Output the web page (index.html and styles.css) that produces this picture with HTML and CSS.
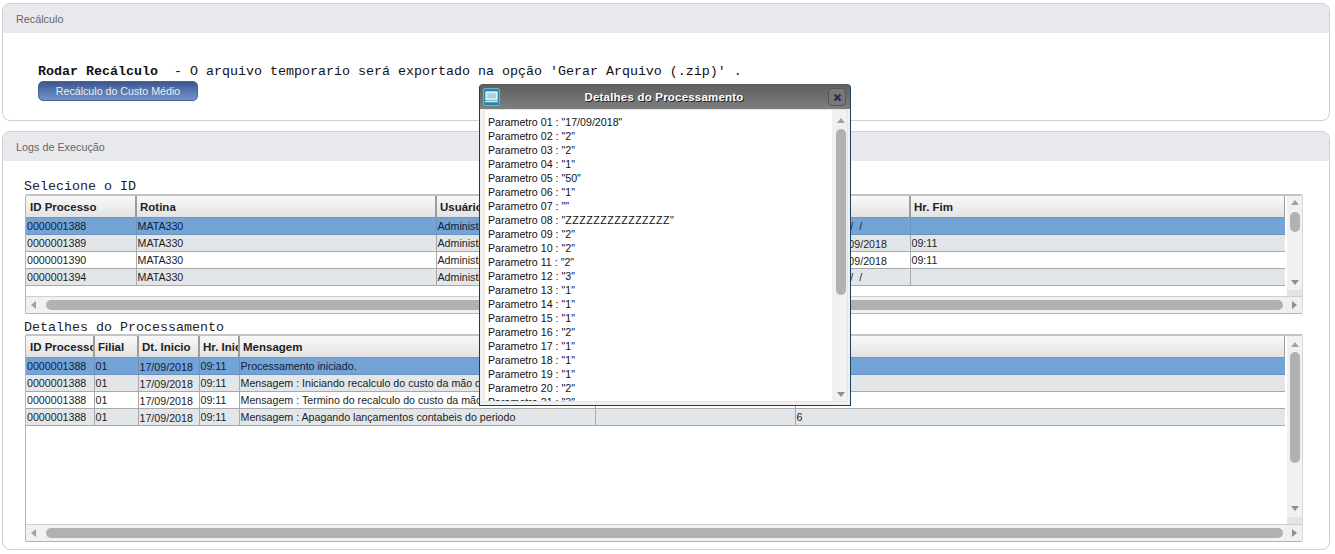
FILE: index.html
```html
<!DOCTYPE html>
<html lang="pt">
<head>
<meta charset="utf-8">
<title>Recálculo</title>
<link rel="stylesheet" href="styles.css">
</head>
<body>
<section class="panel panel-top">
  <h2 class="panel-title">Recálculo</h2>
  <div class="run-body">
    <p class="run-line"><b>Rodar Recálculo</b>  - O arquivo temporario será exportado na opção 'Gerar Arquivo (.zip)' .</p>
    <button class="run-btn" type="button">Recálculo do Custo Médio</button>
  </div>
</section>

<section class="panel panel-logs">
  <h2 class="panel-title">Logs de Execução</h2>
  <div class="logs-body">
    <div class="grid-label">Selecione o ID</div>
    <div class="grid grid-ids">
      <div class="grid-area">
        <table>
          <colgroup><col class="a1"><col class="a2"><col class="a3"><col class="a3"><col class="a3"><col class="a4"><col class="a5"></colgroup>
          <thead><tr><th>ID Processo</th><th>Rotina</th><th>Usuário</th><th>Dt. Inicio</th><th>Hr. Inicio</th><th></th><th>Hr. Fim</th></tr></thead>
          <tbody>
            <tr class="sel"><td>0000001388</td><td>MATA330</td><td>Administrador</td><td class="low">17/09/2018</td><td>09:11</td><td class="pre">     /  /</td><td></td></tr>
            <tr class="alt"><td>0000001389</td><td>MATA330</td><td>Administrador</td><td class="low">17/09/2018</td><td>09:11</td><td class="low">17/09/2018</td><td>09:11</td></tr>
            <tr><td>0000001390</td><td>MATA330</td><td>Administrador</td><td class="low">17/09/2018</td><td>09:11</td><td class="low">17/09/2018</td><td>09:11</td></tr>
            <tr class="alt"><td>0000001394</td><td>MATA330</td><td>Administrador</td><td class="low">17/09/2018</td><td>09:11</td><td class="pre">     /  /</td><td></td></tr>
          </tbody>
        </table>
      </div>
      <div class="vbar">
        <span class="arr up"></span>
        <span class="vthumb thumb-ids"></span>
        <span class="arr down"></span>
      </div>
      <div class="hbar">
        <span class="arr left"></span>
        <span class="hthumb"></span>
      </div>
      <div class="hend"><span class="arr right"></span></div>
    </div>

    <div class="grid-label second">Detalhes do Processamento</div>
    <div class="grid grid-details">
      <div class="grid-area">
        <table>
          <colgroup><col class="b1"><col class="b2"><col class="b3"><col class="b4"><col class="b5"><col class="b6"><col class="b7"></colgroup>
          <thead><tr><th>ID Processo</th><th>Filial</th><th>Dt. Inicio</th><th>Hr. Inicio</th><th>Mensagem</th><th></th><th></th></tr></thead>
          <tbody>
            <tr class="sel"><td>0000001388</td><td>01</td><td class="low">17/09/2018</td><td>09:11</td><td>Processamento iniciado.</td><td></td><td></td></tr>
            <tr class="alt"><td>0000001388</td><td>01</td><td class="low">17/09/2018</td><td>09:11</td><td>Mensagem : Iniciando recalculo do custo da mão de obra</td><td></td><td></td></tr>
            <tr><td>0000001388</td><td>01</td><td class="low">17/09/2018</td><td>09:11</td><td>Mensagem : Termino do recalculo do custo da mão de obra</td><td></td><td></td></tr>
            <tr class="alt"><td>0000001388</td><td>01</td><td class="low">17/09/2018</td><td>09:11</td><td>Mensagem : Apagando lançamentos contabeis do periodo</td><td></td><td>6</td></tr>
          </tbody>
        </table>
      </div>
      <div class="vbar">
        <span class="arr up"></span>
        <span class="vthumb thumb-details"></span>
        <span class="arr down"></span>
      </div>
      <div class="hbar">
        <span class="arr left"></span>
        <span class="hthumb"></span>
      </div>
      <div class="hend"><span class="arr right"></span></div>
    </div>
  </div>
</section>

<aside class="modal">
  <header class="modal-head">
    <span class="modal-icon">
      <svg width="16" height="16" viewBox="0 0 16 16"><rect x="2" y="2.5" width="12" height="8.5" fill="#dfeef5" stroke="#e9f3f7"/><rect x="3.5" y="4" width="9" height="5.5" fill="#a9cfe0"/><path d="M1.5 12h13l.5 1.5H1z" fill="#d5e8f0"/></svg>
    </span>
    <span class="modal-title">Detalhes do Processamento</span>
    <span class="modal-close">
      <svg width="9" height="9" viewBox="0 0 9 9"><path d="M1.5 1.5l6 6M7.5 1.5l-6 6" stroke="#1f2f5a" stroke-width="2.2" fill="none"/></svg>
    </span>
  </header>
  <div class="modal-body">
    <div class="params">
      <div>Parametro 01 : "17/09/2018"</div>
      <div>Parametro 02 : "2"</div>
      <div>Parametro 03 : "2"</div>
      <div>Parametro 04 : "1"</div>
      <div>Parametro 05 : "50"</div>
      <div>Parametro 06 : "1"</div>
      <div>Parametro 07 : ""</div>
      <div>Parametro 08 : "<span class="wide">ZZZZZZZZZZZZZZZ</span>"</div>
      <div>Parametro 09 : "2"</div>
      <div>Parametro 10 : "2"</div>
      <div>Parametro 11 : "2"</div>
      <div>Parametro 12 : "3"</div>
      <div>Parametro 13 : "1"</div>
      <div>Parametro 14 : "1"</div>
      <div>Parametro 15 : "1"</div>
      <div>Parametro 16 : "2"</div>
      <div>Parametro 17 : "1"</div>
      <div>Parametro 18 : "1"</div>
      <div>Parametro 19 : "1"</div>
      <div>Parametro 20 : "2"</div>
      <div>Parametro 21 : "3"</div>
    </div>
    <div class="modal-scroll">
      <span class="arr up"></span>
      <span class="vthumb thumb-modal"></span>
      <span class="arr down"></span>
    </div>
  </div>
</aside>
</body>
</html>
```
FILE: styles.css
```css
* { box-sizing: border-box; }
html, body { margin: 0; padding: 0; height: 554px; overflow: hidden; background: #fff; }
body { position: relative; padding-top: 3px; font-family: "Liberation Sans", Arial, sans-serif; font-size: 10.67px; color: #1c1c1c; }

.panel { margin-left: 2px; width: 1328px; border: 1px solid #cfcfcf; border-radius: 8px; overflow: hidden; background: #fff; }
.panel-top { height: 118px; }
.panel-logs { height: 419px; margin-top: 10px; }
.panel-title { margin: 0; height: 29px; padding: 9px 0 0 13px; background: #e9e9ed; font-weight: normal; font-size: 10.8px; line-height: 13px; color: #666; }

.run-body { padding: 31px 0 0 35px; }
.run-line { margin: 0; height: 17px; white-space: pre; font: 13.33px/16px "Liberation Mono", "Courier New", monospace; color: #111; }
.run-btn { display: block; width: 160px; height: 20px; padding: 0; border: 1px solid #4a6193; border-radius: 5px; background: linear-gradient(#3e5790, #6f95c8); color: #e8eef8; font: 10.67px/16px "Liberation Sans", Arial, sans-serif; }

.logs-body { padding: 17px 0 0 22px; }
.grid-label { height: 16px; margin-left: -1px; padding-top: 2px; font: 13.33px/14px "Liberation Mono", "Courier New", monospace; color: #222; }
.grid-label.second { height: 20px; padding-top: 7px; }

.grid { display: grid; width: 1278px; grid-template-columns: 1fr 17px; grid-template-rows: 1fr 17px; border: 1px solid #b4b4b4; border-top: 2px solid #c4c4c4; border-right-color: #d8d8d8; border-radius: 2px; }
.grid-ids { height: 120px; }
.grid-details { height: 208px; }
.grid-area { overflow: hidden; background: #fff; }

table { table-layout: fixed; width: 1259px; border-collapse: collapse; }
.a1 { width: 110px; } .a2 { width: 300px; } .a3 { width: 132px; } .a4 { width: 78px; } .a5 { width: 375px; }
.b1 { width: 68px; } .b2 { width: 44px; } .b3 { width: 61px; } .b4 { width: 40px; } .b5 { width: 356px; } .b6 { width: 200px; } .b7 { width: 490px; }

th { height: 21px; padding: 2px 0 0 3px; border-style: solid; border-width: 0 2px 1px 1px; border-color: #efefef #9c9c9c #8f8f8f #e6e6e6; background: linear-gradient(#f9f9f9, #e3e3e3); text-align: left; font-size: 11.5px; font-weight: bold; color: #222; white-space: nowrap; overflow: hidden; }
th:first-child { border-left: 0; padding-left: 4px; }
td { height: 17px; padding: 2px 0 0 1px; border: 1px solid #a9a9a9; border-width: 0 1px 1px 0; vertical-align: top; white-space: nowrap; overflow: hidden; line-height: 13px; }
.sel td { background: #74a3d5; border-color: #6c93bf; color: #10203a; }
.alt td { background: #e3e6e9; }
td.low { padding-top: 3px; }
td.pre { white-space: pre; padding-left: 3px; }

.vbar, .modal-scroll { display: flex; flex-direction: column; align-items: center; background: #f1f1f1; }
.vbar { margin-left: 2px; padding-left: 1px; padding-top: 4px; }
.grid-ids .vbar { border-bottom: 6px solid #e4e4e4; }
.grid-details .vbar { padding-top: 6px; border-bottom: 7px solid #e4e4e4; }
.vthumb { display: block; flex: none; width: 10px; background: #b1b1b1; border-radius: 5px; }
.thumb-ids { height: 20px; margin-top: 7px; }
.thumb-details { height: 111px; margin-top: 5px; }
.arr { display: block; flex: none; width: 0; height: 0; border-style: solid; border-color: transparent; }
.arr.up { border-width: 0 4px 5px; border-bottom-color: #a2a2a2; }
.arr.down { border-width: 5px 4px 0; border-top-color: #8f8f8f; margin-top: auto; margin-bottom: 5px; }
.arr.left { border-width: 4px 5px 4px 0; border-right-color: #a2a2a2; }
.arr.right { border-width: 4px 0 4px 5px; border-left-color: #8f8f8f; }
.grid-details .vbar .arr.down { margin-bottom: 6px; }

.hbar { display: flex; align-items: center; padding-left: 5px; border-top: 1px solid #cfcfcf; background: #f1f1f1; }
.hthumb { flex: 1; height: 10px; margin: 0 2px 0 10px; background: #b1b1b1; border-radius: 5px; }
.hend { display: flex; align-items: center; padding-left: 7px; border-top: 1px solid #cfcfcf; background: #efefef; }

.modal { position: absolute; left: 479px; top: 84px; width: 372px; height: 322px; display: flex; flex-direction: column; border: 1px solid #173f5f; border-top-color: #555; border-radius: 4px 4px 0 0; background: #f0f0f0; }
.modal-head { display: flex; flex: none; align-items: center; height: 24px; padding: 0 4px 0 3px; background: linear-gradient(#5f5f5f, #7f7f7f); }
.modal-icon { display: flex; flex: none; align-items: center; justify-content: center; width: 17px; height: 18px; background: #2587a8; border: 1px solid #6fb2c8; border-radius: 2px; }
.modal-title { flex: 1; text-align: center; color: #fff; font-size: 11.5px; font-weight: bold; letter-spacing: .2px; text-shadow: 1px 1px 0 #222; }
.modal-close { display: flex; flex: none; align-items: center; justify-content: center; width: 18px; height: 18px; border: 1px solid #555; border-radius: 4px; background: #787878; }
.modal-body { display: flex; flex: 1; min-height: 0; margin: 0 2px 3px 4px; background: #fff; border: 1px solid #e4e4e4; }
.params { flex: 1; min-width: 0; padding: 5px 0 0 3px; overflow: hidden; font-size: 10.67px; line-height: 14px; color: #111; }
.wide { letter-spacing: .48px; }
.modal-scroll { flex: none; width: 15px; padding: 8px 0 0 2px; }
.thumb-modal { height: 166px; margin-top: 6px; }
.modal-scroll .arr.down { margin-bottom: 4px; }
```
